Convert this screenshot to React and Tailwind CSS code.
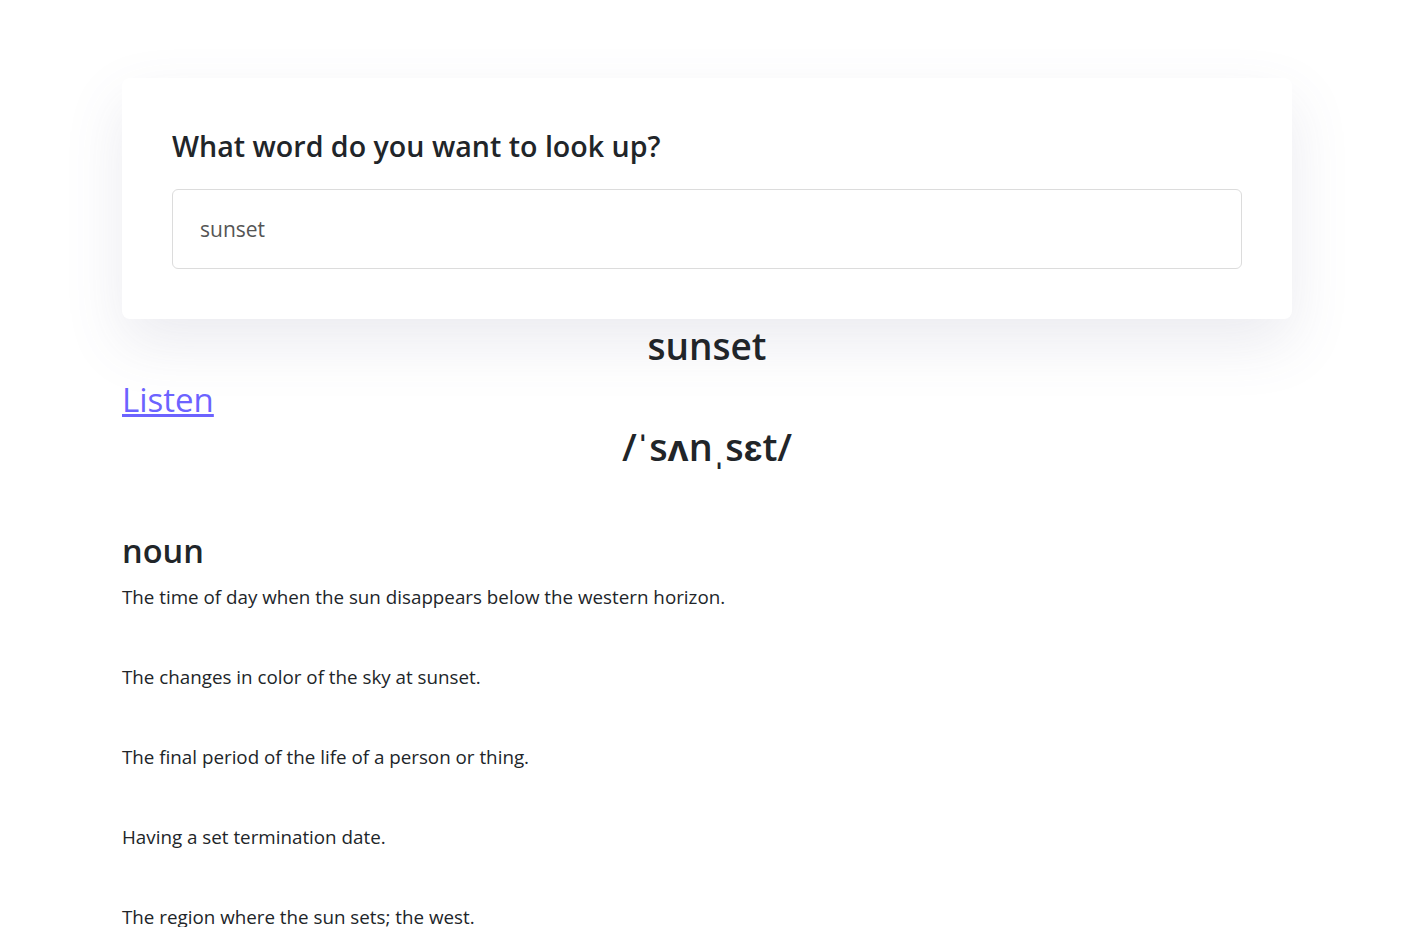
const definitions = [
  'The time of day when the sun disappears below the western horizon.',
  'The changes in color of the sky at sunset.',
  'The final period of the life of a person or thing.',
  'Having a set termination date.',
  'The region where the sun sets; the west.',
]

export default function App() {
  return (
    <div className="min-h-[927px] bg-white text-[#212529] font-['Open_Sans',sans-serif]">
      <div className="ml-[122px] w-[1170px] pt-[78px]">
        <section className="rounded-lg bg-white px-[50px] pt-[50px] pb-[50px] shadow-[0_24px_60px_rgba(90,90,130,0.12)]">
          <h3 className="mb-[26px] text-[28.6px] font-semibold leading-[35px]">What word do you want to look up?</h3>
          <div className="flex h-[80px] items-center rounded-md border border-[#dcdcdc] px-[27px] pt-[2px] text-[21px] text-[#555]">
            sunset
          </div>
        </section>

        <h1 className="text-center text-[37px] font-semibold leading-[54px]">sunset</h1>
        <a href="#" className="mt-[3px] block w-fit text-[33px] leading-[48px] text-[#6c63ff] underline">Listen</a>
        <h1 className="-mt-[3px] text-center text-[37.8px] font-semibold leading-[52px]">/ˈsʌnˌsɛt/</h1>

        <div className="mt-[57px]">
          <h2 className="mb-[13px] text-[32.5px] font-semibold leading-[42px]">noun</h2>
          <div className="flex flex-col gap-[56px]">
            {definitions.map((d) => (
              <p key={d} className="text-[18.8px] leading-[24px]">{d}</p>
            ))}
          </div>
        </div>
      </div>
    </div>
  )
}
